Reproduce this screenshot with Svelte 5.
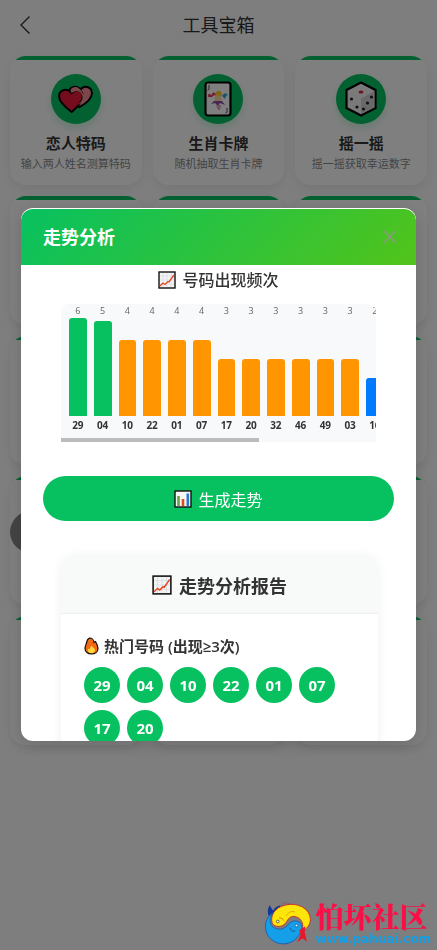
<script lang="ts">
  interface Tool {
    icon: 'hearts' | 'joker' | 'dice';
    name: string;
    desc: string;
  }

  interface Bar {
    num: string;
    count: number;
  }

  const tools: Tool[] = [
    { icon: 'hearts', name: '恋人特码', desc: '输入两人姓名测算特码' },
    { icon: 'joker', name: '生肖卡牌', desc: '随机抽取生肖卡牌' },
    { icon: 'dice', name: '摇一摇', desc: '摇一摇获取幸运数字' },
  ];

  const placeholders = Array.from({ length: 12 }, (_, i) => i);

  const bars: Bar[] = [
    { num: '29', count: 6 },
    { num: '04', count: 5 },
    { num: '10', count: 4 },
    { num: '22', count: 4 },
    { num: '01', count: 4 },
    { num: '07', count: 4 },
    { num: '17', count: 3 },
    { num: '20', count: 3 },
    { num: '32', count: 3 },
    { num: '46', count: 3 },
    { num: '49', count: 3 },
    { num: '03', count: 3 },
    { num: '16', count: 2 },
  ];

  const hot = ['29', '04', '10', '22', '01', '07', '17', '20'];

  function barHeight(count: number) {
    return Math.min(count * 19, 98);
  }

  function barColor(count: number) {
    if (count >= 5) return '#07c160';
    if (count >= 3) return '#ff9500';
    return '#007aff';
  }
</script>

{#snippet trendIcon(size: number)}
  <svg width={size} height={size} viewBox="0 0 18 18" aria-hidden="true">
    <rect x="1" y="1" width="16" height="16" fill="#f4f4f4" stroke="#111" stroke-width="1.4" />
    <path d="M5 2v14M9 2v14M13 2v14M2 5h14M2 9h14M2 13h14" stroke="#d5dadd" stroke-width=".7" />
    <path d="M2 15l3-3 2 1.5 3-3 1 .5L16 4" fill="none" stroke="#e2451f" stroke-width="1.3" />
  </svg>
{/snippet}

<div class="page">
  <header class="topbar">
    <button class="back" aria-label="返回">
      <svg width="12" height="20" viewBox="0 0 12 20" aria-hidden="true">
        <path d="M10.5 1.5L2 10l8.5 8.5" fill="none" stroke="#333" stroke-width="1.4" />
      </svg>
    </button>
    <h1>工具宝箱</h1>
  </header>

  <main class="grid">
    {#each tools as tool (tool.name)}
      <article class="card">
        <span class="circle">
          {#if tool.icon === 'hearts'}
            <svg width="35" height="29" viewBox="0 0 36 30" aria-hidden="true">
              <path
                d="M22 23C15 18 11 13 11 8.500C11 1 20 0 23 5C26 0 35 1 35 8.500C35 14 29 19 22 23Z"
                fill="#f88f96" stroke="#000" stroke-width="2" />
              <path
                d="M14 28C6 22 1 17 1 12C1 4 10 3 14 8.500C18 4 26 5 25.500 12C25 18 20 23 14 28Z"
                fill="#e8193a" stroke="#000" stroke-width="2" />
              <path
                d="M14 8.500C12 5 14 2 18 2C21 2 22 4 23 5L28 12C28 16 26 18 24 19L20 21C24 17 26 15 25 11C24 6 18 5 14 8.500Z"
                fill="#f88f96" />
            </svg>
          {:else if tool.icon === 'joker'}
            <svg width="28" height="36" viewBox="0 0 28 36" aria-hidden="true">
              <rect x="1.500" y="1.500" width="25" height="33" rx="2.500" fill="#fff" stroke="#000" stroke-width="2.200" />
              <path d="M5 4v4q0 1-1.500 1M23 27v4q0 1-1.500 1" fill="none" stroke="#444" />
              <path d="M8 16q-4-5-3 0M8 15q1-5 4-1" fill="#e63b5c" stroke="#e63b5c" stroke-width="1.5" />
              <path d="M11 15q1-6 4-5q3 0 3 5z" fill="#ffc928" />
              <path d="M18 15q3-5 6-1q-2 0-3 4z" fill="#34a9d3" />
              <circle cx="14" cy="17.500" r="3.500" fill="#ffd4a5" />
              <path d="M10 20l-3 3 4-1 3 3 2-3 5 2-3-4z" fill="#8a4fa3" />
              <path d="M12 24h5l-1 5h-2z" fill="#e4a1bd" />
            </svg>
          {:else}
            <svg width="32" height="36" viewBox="0 0 32 36" aria-hidden="true">
              <path d="M16 1.500L30.500 9v18L16 34.500 1.500 27V9z" fill="#f5f5f5" stroke="#000" stroke-width="2.200" />
              <path d="M16 17.500L29.500 10v16.500L16 33z" fill="#d2d2d2" />
              <ellipse cx="16" cy="11" rx="2.400" ry="1.600" fill="#df1f43" />
              <g fill="#222">
                <circle cx="6.500" cy="18" r="1.600" />
                <circle cx="12" cy="26" r="1.600" />
                <circle cx="26.500" cy="16" r="1.600" />
                <circle cx="22.500" cy="22" r="1.600" />
                <circle cx="18.500" cy="28" r="1.600" />
              </g>
            </svg>
          {/if}
        </span>
        <h2>{tool.name}</h2>
        <p>{tool.desc}</p>
      </article>
    {/each}
    {#each placeholders as i (i)}
      <div class="card"></div>
    {/each}
  </main>
  <div class="float-ball"></div>
</div>

<div class="overlay">
  <div class="modal" role="dialog" aria-labelledby="modal-title">
    <header class="modal-head">
      <h2 id="modal-title">走势分析</h2>
      <button class="close" aria-label="关闭">
        <svg width="16" height="16" viewBox="0 0 16 16" aria-hidden="true">
          <path d="M2 2l12 12M14 2L2 14" stroke="#8c9a84" stroke-width="1.6" />
        </svg>
      </button>
    </header>

    <div class="modal-body">
      <h3 class="chart-title">{@render trendIcon(18)} 号码出现频次</h3>

      <div class="chart">
        <div class="plot">
          {#each bars as bar (bar.num)}
            <div class="col">
              <span class="count">{bar.count}</span>
              <span class="bar" style="height: {barHeight(bar.count)}px; background: {barColor(bar.count)}"></span>
              <span class="num">{bar.num}</span>
            </div>
          {/each}
        </div>
        <div class="thumb"></div>
      </div>

      <button class="generate">
        <svg width="18" height="18" viewBox="0 0 18 18" aria-hidden="true">
          <rect x="1" y="1" width="16" height="16" fill="#f6f6f6" stroke="#111" stroke-width="1.4" />
          <path d="M4.500 16V6" stroke="#62a744" stroke-width="2.600" />
          <path d="M9 16V9" stroke="#dc4b26" stroke-width="2.600" />
          <path d="M13.800 16V3.500" stroke="#287dca" stroke-width="2.600" />
        </svg>
        生成走势
      </button>

      <section class="report">
        <h3>{@render trendIcon(20)} 走势分析报告</h3>
        <div class="report-body">
          <h4>
            <svg width="15" height="18" viewBox="0 0 15 18" aria-hidden="true">
              <path
                d="M5.500 1C8 1 10 3 10 5.500L11.500 4.500C13 7 14 9 14 11.500C14 15 11 17 7.500 17C4 17 1 15 1 11.500C1 9 2 8 2.500 6C2.700 4 3.500 2 5.500 1Z"
                fill="#f36a16" stroke="#111" stroke-width="1.200" />
              <path d="M7.500 16C4.500 16 3.500 14 4 11.500L5.500 12.500C6 10.500 7 9.500 8 8.500C8 11 11.500 11 11 13.500C10.500 15.500 9 16 7.500 16Z" fill="#ffd83b" />
            </svg>
            热门号码 (出现≥3次)
          </h4>
          <div class="balls">
            {#each hot as n (n)}
              <span class="ball">{n}</span>
            {/each}
          </div>
        </div>
      </section>
    </div>
  </div>
</div>

<div class="brand">
  <svg width="47" height="43" viewBox="9 14 140 128" aria-hidden="true">
    <path d="M62 22Q66 12 88 20M66 136Q80 144 84 132" fill="none" stroke="#8a4a78" stroke-width="2" />
    <path d="M24 58C18 44 20 34 26 24L36 40C42 30 48 26 58 24C52 34 50 44 40 52Z" fill="#14379a" />
    <path
      d="M34 78C26 56 40 30 74 23C108 14 146 34 147 64C148 84 134 96 122 100C128 84 124 64 104 58C86 54 82 64 74 76C64 90 42 90 34 78Z"
      fill="#ffe60a" stroke="#c7202f" stroke-width="2.500" />
    <path
      d="M36 46C12 60 6 92 22 116C40 142 78 146 102 126C118 112 126 92 120 80C112 66 92 68 82 80C72 94 56 98 42 92C26 86 22 64 36 46Z"
      fill="#159fe8" stroke="#1c58ae" stroke-width="2.500" />
    <path d="M114 98L132 86 130 104 137 132 124 122 108 134 118 112Z" fill="#e9162c" />
    <path d="M74 56q14-20 28-12" fill="none" stroke="#d8a500" stroke-width="2.500" />
    <path d="M54 62q10-2 14 8" fill="none" stroke="#b07a10" stroke-width="2.500" />
    <path d="M86 90q4 14 16 10" fill="none" stroke="#0b4f93" stroke-width="2.500" />
    <circle cx="50" cy="72" r="4" fill="#fff" stroke="#222" stroke-width="2" />
    <circle cx="106" cy="84" r="4" fill="#fff" stroke="#173f94" stroke-width="2" />
  </svg>
  <div class="brand-text">
    <strong>怕坏社区</strong>
    <span>www.pahuai.com</span>
  </div>
</div>

<style>
  :global(body) {
    margin: 0;
    background: #fff;
    font-family: 'Open Sans', 'Noto Sans', 'Noto Sans CJK SC', sans-serif;
  }
  h1,
  h2,
  h3,
  h4,
  p {
    margin: 0;
  }
  button {
    border: none;
    padding: 0;
    font-family: inherit;
    cursor: pointer;
  }
  svg {
    flex: none;
  }
  .page {
    min-height: 100vh;
    background: #fdfdfd;
  }
  .topbar {
    display: grid;
    grid-template-columns: 32px 1fr 32px;
    align-items: center;
    height: 50px;
    padding: 0 9px;
  }
  .back {
    display: flex;
    justify-content: center;
    background: none;
  }
  .topbar h1 {
    font-size: 18px;
    font-weight: 400;
    line-height: 26px;
    text-align: center;
    color: #333;
  }
  .grid {
    display: grid;
    grid-template-columns: repeat(3, 1fr);
    gap: 11px;
    padding: 6px 10px;
  }
  .card {
    display: flex;
    flex-direction: column;
    align-items: center;
    box-sizing: border-box;
    min-height: 129px;
    padding-top: 18px;
    overflow: hidden;
    border-radius: 16px;
    background: linear-gradient(#07c160 0 4px, #fff 4px);
    box-shadow: 0 4px 12px rgba(0, 0, 0, 0.08);
  }
  .circle {
    display: flex;
    align-items: center;
    justify-content: center;
    width: 50px;
    height: 50px;
    border-radius: 50%;
    background: #07c160;
    box-shadow: 0 4px 8px rgba(7, 193, 96, 0.2);
  }
  .card h2 {
    margin-top: 8px;
    font-size: 15px;
    font-weight: 700;
    line-height: 22px;
    color: #333;
  }
  .card p {
    font-size: 11px;
    line-height: 20px;
    white-space: nowrap;
    color: #888;
  }
  .float-ball {
    position: fixed;
    top: 56%;
    left: 10px;
    width: 42px;
    height: 42px;
    margin-top: -21px;
    border-radius: 50%;
    background: #888;
  }
  .overlay {
    position: fixed;
    inset: 0;
    display: flex;
    align-items: center;
    justify-content: center;
    padding: 0 21px 1px;
    background: rgba(0, 0, 0, 0.5);
  }
  .modal {
    display: flex;
    flex-direction: column;
    width: 100%;
    max-height: calc(100vh - 417px);
    overflow: hidden;
    border-radius: 12px;
    background: #fff;
    box-shadow: 0 4px 16px rgba(0, 0, 0, 0.15);
  }
  .modal-head {
    display: flex;
    flex: none;
    align-items: center;
    justify-content: space-between;
    height: 56px;
    margin-top: 1px;
    padding: 0 18px 0 22px;
    border-radius: 12px 12px 0 0;
    background: linear-gradient(135deg, #07c160, #52c41a);
  }
  .modal-head h2 {
    font-size: 18px;
    font-weight: 700;
    line-height: 26px;
    color: #fff;
  }
  .close {
    display: flex;
    background: none;
  }
  .modal-body {
    overflow-y: auto;
    padding: 0 22px 22px;
    scrollbar-width: none;
  }
  .chart-title {
    display: flex;
    align-items: center;
    justify-content: center;
    gap: 6px;
    font-size: 16px;
    font-weight: 500;
    line-height: 30px;
    color: #333;
  }
  .chart {
    margin: 9px 18px 0;
    overflow: hidden;
    border-radius: 8px 8px 0 0;
    background: #f8f9fa;
  }
  .plot {
    display: grid;
    grid-template-columns: repeat(20, 1fr);
    column-gap: 7px;
    box-sizing: border-box;
    width: 160%;
    height: 134px;
    padding: 0 8px;
  }
  .col {
    display: flex;
    flex-direction: column;
    align-items: center;
    min-width: 0;
  }
  .count {
    font-size: 9px;
    line-height: 13px;
    color: #666;
  }
  .bar {
    width: 100%;
    margin-top: auto;
    border-radius: 3px 3px 0 0;
  }
  .num {
    font-size: 10px;
    font-weight: 700;
    line-height: 18px;
    padding-bottom: 4px;
    color: #333;
  }
  .thumb {
    width: 63%;
    height: 4px;
    background: #bbb;
  }
  .generate {
    display: flex;
    align-items: center;
    justify-content: center;
    gap: 6px;
    width: 100%;
    height: 45px;
    margin-top: 34px;
    border-radius: 23px;
    background: #07c160;
    color: #fff;
    font-size: 16px;
  }
  .report {
    margin: 33px 16px 0 18px;
    overflow: hidden;
    border-radius: 16px;
    background: #fff;
    box-shadow: 0 2px 12px rgba(0, 0, 0, 0.06);
  }
  .report h3 {
    display: flex;
    align-items: center;
    justify-content: center;
    gap: 7px;
    height: 60px;
    padding-top: 3px;
    box-sizing: border-box;
    border-bottom: 1px solid #eee;
    background: #f8f9f9;
    font-size: 18px;
    font-weight: 700;
    color: #333;
  }
  .report-body {
    padding: 21px 23px;
  }
  .report h4 {
    display: flex;
    align-items: center;
    gap: 5px;
    font-size: 15px;
    font-weight: 600;
    line-height: 22px;
    color: #333;
  }
  .balls {
    display: flex;
    flex-wrap: wrap;
    gap: 7px;
    margin-top: 10px;
  }
  .ball {
    width: 36px;
    height: 36px;
    border-radius: 50%;
    background: #07c160;
    color: #fff;
    font-size: 15px;
    font-weight: 700;
    line-height: 36px;
    text-align: center;
  }
  .brand {
    position: fixed;
    right: 6px;
    bottom: 4px;
    display: flex;
    align-items: center;
    gap: 5px;
  }
  .brand-text {
    display: flex;
    flex-direction: column;
  }
  .brand strong {
    font-family: 'Noto Serif CJK SC', 'Noto Sans CJK SC', serif;
    font-size: 28px;
    font-weight: 900;
    line-height: 32px;
    color: #fb0f46;
  }
  .brand span {
    font-family: 'DejaVu Sans', sans-serif;
    font-size: 12px;
    font-weight: 700;
    line-height: 14px;
    color: #139fe5;
  }
</style>
